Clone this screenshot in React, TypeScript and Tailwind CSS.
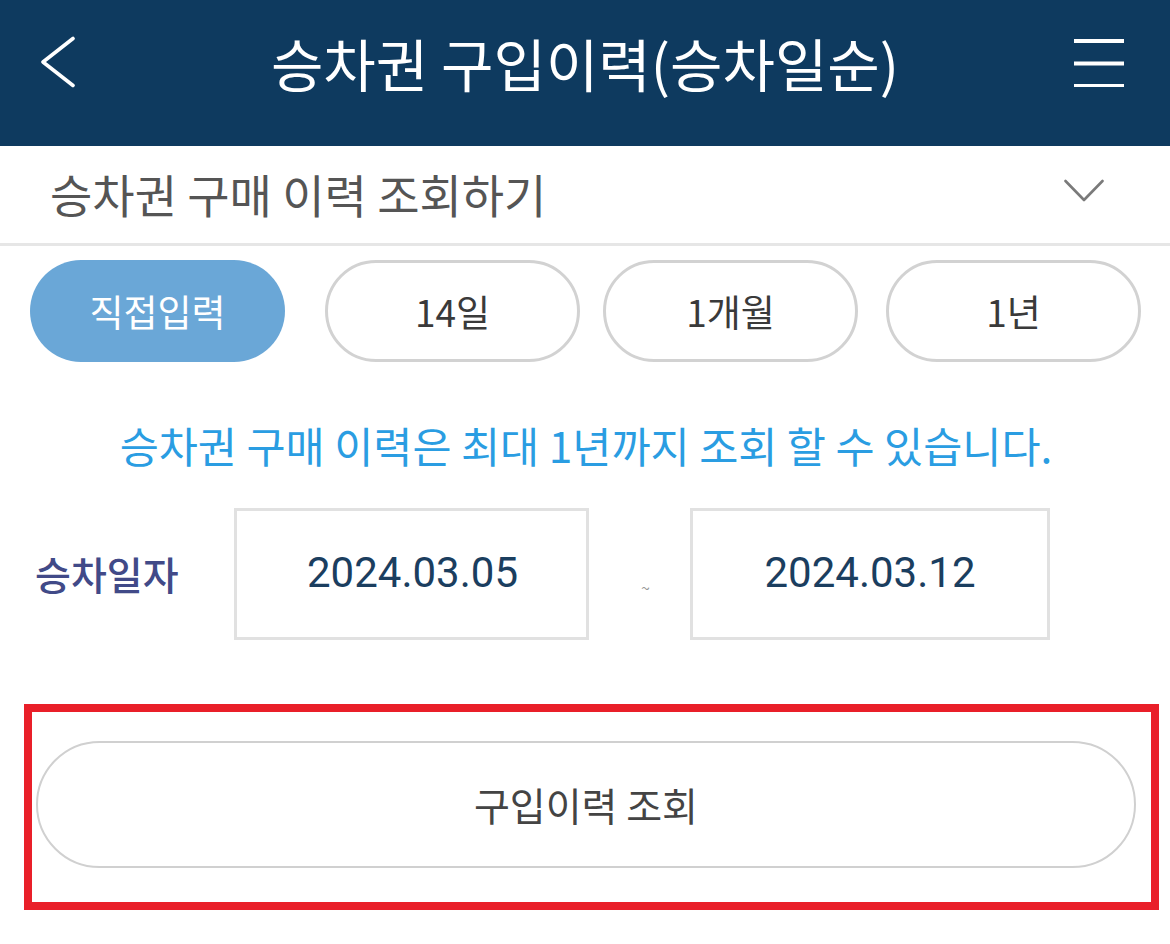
import React from 'react';

const KR = { fontFamily: '"Noto Sans CJK KR", "Noto Sans", sans-serif' };

interface Period {
  label: string;
  active?: boolean;
  gap: string;
}

const periods: Period[] = [
  { label: '직접입력', active: true, gap: 'ml-[30px]' },
  { label: '14일', gap: 'ml-[40px]' },
  { label: '1개월', gap: 'ml-[23px]' },
  { label: '1년', gap: 'ml-[28px]' },
];

function BackIcon() {
  return (
    <svg width="36" height="52" viewBox="0 0 36 52" fill="none">
      <polyline points="33,2.5 3,26 33,49.5" stroke="#ffffff" strokeWidth="3.6" strokeLinecap="round" strokeLinejoin="round" />
    </svg>
  );
}

function MenuIcon() {
  return (
    <svg width="50" height="50" viewBox="0 0 50 50" fill="none">
      <rect x="0" y="2" width="50" height="4" fill="#ffffff" />
      <rect x="0" y="24.5" width="50" height="4" fill="#ffffff" />
      <rect x="0" y="47" width="50" height="4" fill="#ffffff" />
    </svg>
  );
}

function ChevronDown() {
  return (
    <svg width="40" height="24" viewBox="0 0 40 24" fill="none">
      <polyline points="1.5,2 20,21 38.5,2" stroke="#7a7a7a" strokeWidth="2.6" strokeLinecap="round" strokeLinejoin="round" />
    </svg>
  );
}

export default function App() {
  return (
    <div className="w-[1170px] h-[944px] bg-white overflow-hidden" style={KR}>
      {/* Header */}
      <header className="h-[146px] bg-[#0e3a5f] flex items-center pb-[22px]">
        <div className="w-[130px] pl-[40px] flex items-center">
          <BackIcon />
        </div>
        <h1 className="flex-1 text-center text-white text-[57px] leading-none">
          승차권 구입이력(승차일순)
        </h1>
        <div className="w-[130px] pr-[46px] flex items-center justify-end">
          <MenuIcon />
        </div>
      </header>

      {/* Collapsible title */}
      <div className="h-[100px] flex items-center justify-between pl-[50px] pr-[66px] border-b-[3px] border-[#e6e6e6]">
        <span className="text-[46px] text-[#555555] leading-none pb-[4px]">승차권 구매 이력 조회하기</span>
        <div className="pb-[8px]">
          <ChevronDown />
        </div>
      </div>

      {/* Period pills */}
      <div className="flex mt-[14px]">
        {periods.map((p) => (
          <button
            key={p.label}
            className={`${p.gap} w-[255px] h-[102px] rounded-full flex items-center justify-center text-[37px] leading-none ${
              p.active
                ? 'bg-[#6aa7d7] text-white'
                : 'bg-white text-[#3a3a3a] border-[3px] border-[#d2d2d2]'
            }`}
            style={KR}
          >
            {p.label}
          </button>
        ))}
      </div>

      {/* Notice */}
      <p className="mt-[61px] text-center text-[#2a9de2] text-[42.5px] leading-[44px] pl-[2px]">
        승차권 구매 이력은 최대 1년까지 조회 할 수 있습니다.
      </p>

      {/* Date row */}
      <div className="flex items-center mt-[41px]">
        <span className="w-[234px] pl-[35px] text-[39px] text-[#414a88] font-medium leading-none pb-[2px]">승차일자</span>
        <div className="w-[355px] h-[132px] border-[3px] border-[#e1e1e1] flex items-center justify-center pb-[2px]">
          <span className="text-[42px] text-[#1b3e5f] leading-none pl-[2px]" style={{ fontFamily: 'Roboto, "Liberation Sans", sans-serif' }}>
            2024.03.05
          </span>
        </div>
        <div className="w-[101px] flex justify-center pt-[26px] pl-[12px]">
          <span className="text-[16px] text-[#9a9a9a] leading-none">~</span>
        </div>
        <div className="w-[360px] h-[132px] border-[3px] border-[#e1e1e1] flex items-center justify-center pb-[2px]">
          <span className="text-[42px] text-[#1b3e5f] leading-none" style={{ fontFamily: 'Roboto, "Liberation Sans", sans-serif' }}>
            2024.03.12
          </span>
        </div>
      </div>

      {/* Highlighted search button */}
      <div className="ml-[24px] mt-[64px] w-[1135px] border-[8px] border-[#e91f29] pt-[29px] pb-[34px] pl-[4px] pr-[15px]">
        <button className="w-full h-[127px] rounded-full border-2 border-[#d0d0d0] bg-white flex items-center justify-center text-[39px] text-[#444444] leading-none" style={KR}>
          구입이력 조회
        </button>
      </div>
    </div>
  );
}
